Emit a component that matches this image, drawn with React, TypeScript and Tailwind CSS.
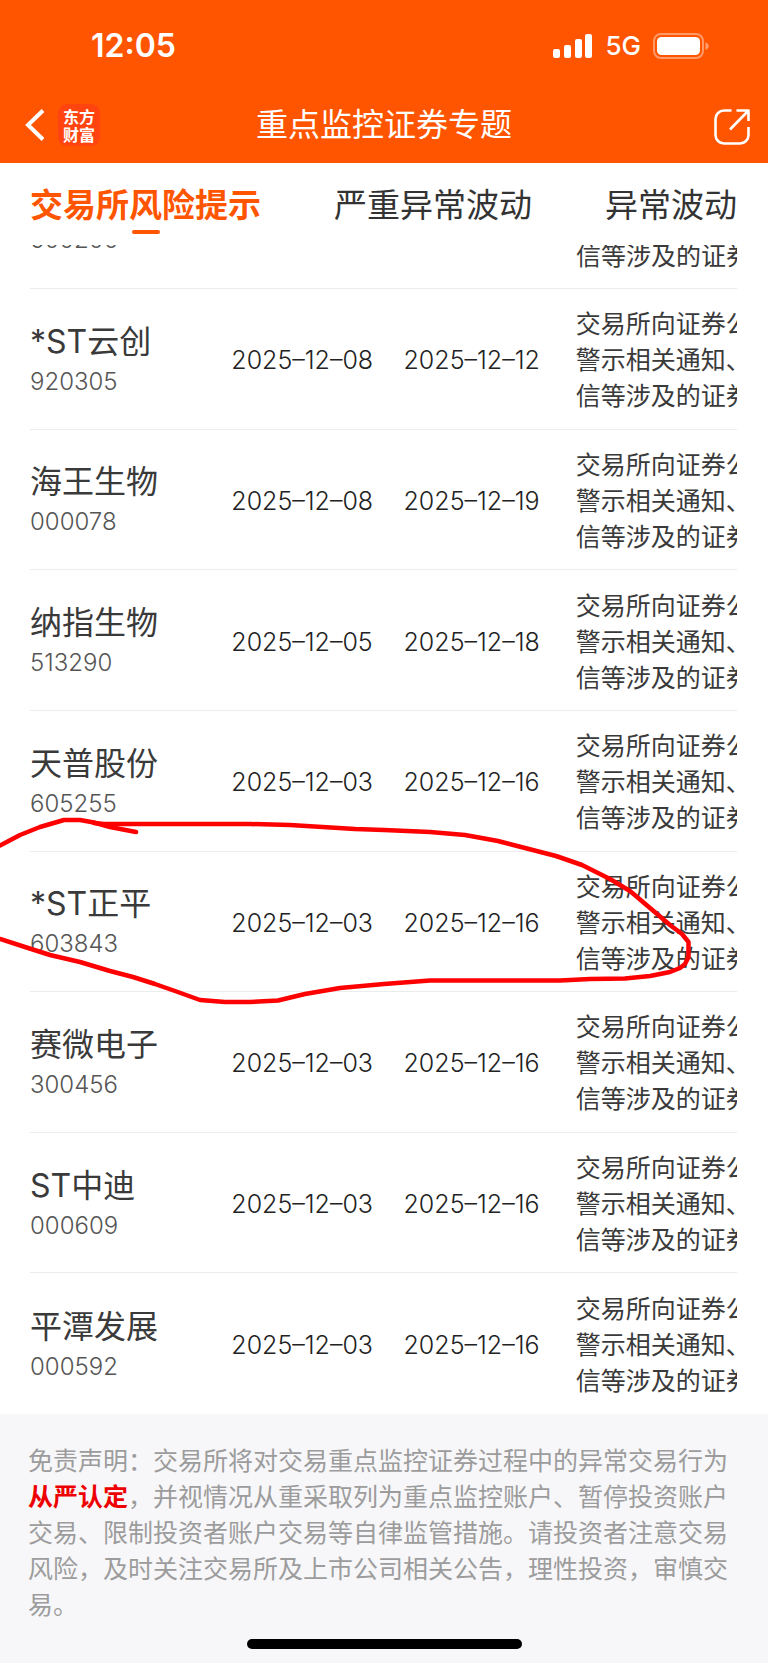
import React from "react";

type Stock = { name: string; code: string; start: string; end: string; circled?: boolean };

const stocks: Stock[] = [
  { name: "*ST云创", code: "920305", start: "2025–12–08", end: "2025–12–12" },
  { name: "海王生物", code: "000078", start: "2025–12–08", end: "2025–12–19" },
  { name: "纳指生物", code: "513290", start: "2025–12–05", end: "2025–12–18" },
  { name: "天普股份", code: "605255", start: "2025–12–03", end: "2025–12–16" },
  { name: "*ST正平", code: "603843", start: "2025–12–03", end: "2025–12–16", circled: true },
  { name: "赛微电子", code: "300456", start: "2025–12–03", end: "2025–12–16" },
  { name: "ST中迪", code: "000609", start: "2025–12–03", end: "2025–12–16" },
  { name: "平潭发展", code: "000592", start: "2025–12–03", end: "2025–12–16" },
];

const reasonLines = ["交易所向证券公", "警示相关通知、", "信等涉及的证券"];

function StatusBar() {
  return (
    <div className="flex h-[92px] items-center justify-between pl-[91px] pr-[58px]">
      <span className="text-[32px] font-semibold leading-[40px]">12:05</span>
      <div className="flex items-center gap-[12px]">
        <svg width="40" height="26" viewBox="0 0 40 26" fill="currentColor" aria-hidden="true">
          <rect x="0" y="16" width="7" height="9" rx="2" />
          <rect x="11" y="12" width="7" height="13" rx="2" />
          <rect x="22" y="6" width="7" height="19" rx="2" />
          <rect x="32" y="1" width="7" height="24" rx="2" />
        </svg>
        <span className="text-[26px] font-medium leading-[32px]">5G</span>
        <svg width="57" height="26" viewBox="0 0 57 26" aria-hidden="true">
          <rect x="1" y="1" width="49" height="24" rx="7" fill="none" stroke="#fff" strokeOpacity="0.4" strokeWidth="2" />
          <rect x="4" y="4" width="43" height="18" rx="4.5" fill="#fff" />
          <path d="M52.5 9.2c2 .7 3.2 2.100 3.200 3.800s-1.200 3.100-3.200 3.800z" fill="#fff" fillOpacity="0.45" />
        </svg>
      </div>
    </div>
  );
}

function TitleBar() {
  return (
    <div className="grid h-[71px] grid-cols-[1fr_auto_1fr] items-center px-[17px] pb-[6px]">
      <div className="flex items-center gap-[12px] pl-[7px]">
        <button type="button" aria-label="返回">
          <svg width="22" height="34" viewBox="0 0 22 34" fill="none" stroke="#fff" strokeWidth="4" aria-hidden="true">
            <path d="M19 2.500L4 17l15 14.500" strokeLinejoin="miter" />
          </svg>
        </button>
        <div className="grid h-[42px] w-[42px] place-content-center rounded-[9px] bg-[#ff4410] text-center font-[Noto_Sans_CJK_SC,sans-serif] text-[16px] font-bold leading-[18px]">
          东方
          <br />
          财富
        </div>
      </div>
      <h1 className="text-[32px] leading-[40px]">重点监控证券专题</h1>
      <button type="button" aria-label="分享" className="justify-self-end">
        <svg width="38" height="38" viewBox="0 0 38 38" fill="none" stroke="#fff" strokeWidth="2.600" aria-hidden="true" className="mt-[4px]">
          <path d="M18.500 2.500H11A8.500 8.500 0 0 0 2.500 11v16a8.500 8.500 0 0 0 8.500 8.500h16a8.500 8.500 0 0 0 8.500-8.500v-8" />
          <path d="M23.500 2.500h12v10.500M35 3L17 21.500" strokeLinejoin="round" />
        </svg>
      </button>
    </div>
  );
}

function Tabs() {
  return (
    <nav className="flex h-[82px] items-start justify-between pl-[30px] pr-[31px] pt-[20px] text-[33px] leading-[44px] text-[#333]">
      <button type="button" className="flex flex-col items-center font-bold text-[#ff5500]">
        交易所风险提示
        <span className="mt-[3px] h-[4px] w-[28px] rounded-full bg-[#ff5500]" />
      </button>
      <button type="button">严重异常波动</button>
      <button type="button">异常波动</button>
    </nav>
  );
}

function PenCircle() {
  return (
    <svg
      className="pointer-events-none absolute -left-[30px] -top-[42px] z-10 h-[200px] w-[calc(100%+61px)]"
      viewBox="0 0 768 200"
      preserveAspectRatio="none"
      fill="none"
      stroke="#fe0000"
      strokeWidth="4.500"
      strokeLinecap="round"
      strokeLinejoin="round"
      aria-hidden="true"
    >
      <path d="M136 22L110 17L94 12.500L80 10H64L40 17L20 25L0 35.500" />
      <path d="M94 13L104 14H250L290 15L355 19L384 20L430 22L465 25L498 31L525 38L556 46L582 55L610 69L630 81L650 98L670 115L682 124L688.500 132V147L685 154L680 158L670 162L650 166L625 168.500L590 169L560 170.500H430L384 174L340 178L305 184L278 190.500L250 192H225L200 190L175 181L155 174L133 167L110 161L80 152L50 145L25 137L0 129" />
    </svg>
  );
}

const rowGrid = "grid grid-cols-[201fr_172fr_172fr_161fr] items-center border-b border-[#ececec] last:border-b-0";

function StockTable() {
  return (
    <table className="mx-[30px] mr-[31px] flex flex-1 flex-col text-[#3a3a3a]">
      <tbody className="flex flex-1 flex-col">
        <tr className="flex h-[44px] items-end justify-between overflow-hidden border-b border-[#ececec]">
          <td className="h-[44px] overflow-hidden">
            <div className="-mt-[24px] text-[24px] font-light leading-[40px] text-[#555]">600200</div>
          </td>
          <td className="h-[44px] w-[161px] overflow-hidden whitespace-nowrap">
            <div className="-mt-[6px] text-[25px] leading-[36px]">{reasonLines[2]}</div>
          </td>
        </tr>
        {stocks.map((s) => (
          <tr key={s.code} className={`relative min-h-[140px] flex-1 ${rowGrid}`}>
            <td className="pt-[6px]">
              <div className="text-[32px] leading-[40px]">{s.name}</div>
              <div className="text-[24px] font-light leading-[40px] text-[#555]">{s.code}</div>
              {s.circled && <PenCircle />}
            </td>
            <td className="whitespace-nowrap pt-[3px] text-[25px] font-light leading-[36px] text-[#222]">{s.start}</td>
            <td className="whitespace-nowrap pt-[3px] text-[25px] font-light leading-[36px] text-[#222]">{s.end}</td>
            <td className="min-w-0 overflow-hidden whitespace-nowrap pt-[3px] text-[25px] leading-[36px]">
              {reasonLines.map((line) => (
                <div key={line}>{line}</div>
              ))}
            </td>
          </tr>
        ))}
      </tbody>
    </table>
  );
}

export default function App() {
  return (
    <div className="flex min-h-screen flex-col overflow-x-hidden bg-white font-[Inter,Noto_Sans_CJK_SC,sans-serif]">
      <header className="bg-[#ff5500] text-white">
        <StatusBar />
        <TitleBar />
      </header>
      <Tabs />
      <StockTable />
      <footer className="bg-[#f7f7fa] px-[28px] pb-[14px] pt-[29px]">
        <p className="text-[25px] leading-[36px] text-[#9c9c9c]">
          免责声明：交易所将对交易重点监控证券过程中的异常交易行为
          <strong className="font-bold text-[#ee0000]">从严认定</strong>
          ，并视情况从重采取列为重点监控账户、暂停投资账户交易、限制投资者账户交易等自律监管措施。请投资者注意交易风险，及时关注交易所及上市公司相关公告，理性投资，审慎交易。
        </p>
        <div className="mx-auto mt-[16px] h-[10px] w-[275px] rounded-full bg-black" />
      </footer>
    </div>
  );
}
